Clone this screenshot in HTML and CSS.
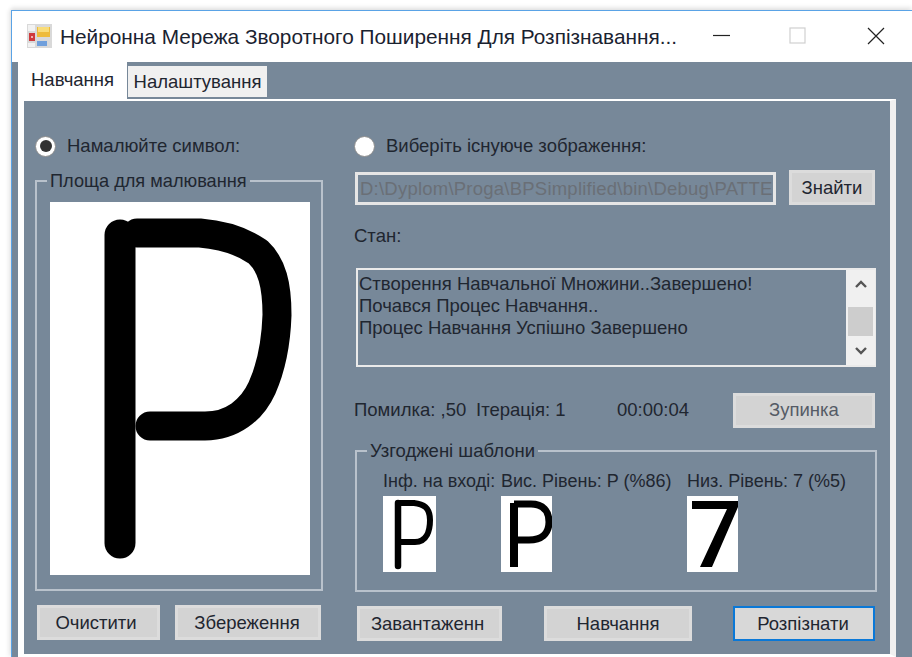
FILE: index.html
```html
<!DOCTYPE html>
<html lang="uk">
<head>
<meta charset="utf-8">
<title>Нейронна Мережа</title>
<link rel="stylesheet" href="styles.css">
</head>
<body>
<div class="window">
  <header class="titlebar">
    <svg class="app-icon" width="25" height="24" viewBox="0 0 25 24">
      <rect width="25" height="24" fill="#d9d9d9"/>
      <rect x="1" y="1" width="7" height="6" fill="#f2f2f2"/>
      <rect x="10" y="3" width="13" height="10" fill="#eebb3a"/>
      <rect x="11" y="3" width="11" height="5" fill="#f9dc78"/>
      <rect x="2" y="9" width="6" height="8" fill="#cf3a3c"/>
      <rect x="4" y="12" width="2" height="2" fill="#f0b0b0"/>
      <rect x="10" y="17" width="10" height="5" fill="#6f9fdc"/>
      <rect x="1" y="19" width="7" height="4" fill="#f2f2f2"/>
    </svg>
    <span class="title">Нейронна Мережа Зворотного Поширення Для Розпізнавання...</span>
    <div class="controls">
      <svg class="ctl-min" width="18" height="18" viewBox="0 0 18 18"><path d="M0 8.5H17" stroke="#222" stroke-width="1.2"/></svg>
      <svg width="18" height="18" viewBox="0 0 18 18"><rect x="1" y="1" width="15" height="15" fill="none" stroke="#d0d0d0" stroke-width="1.2"/></svg>
      <svg width="18" height="18" viewBox="0 0 18 18"><path d="M1 1L17 17M17 1L1 17" stroke="#222" stroke-width="1.2"/></svg>
    </div>
  </header>

  <div class="client">
    <nav class="tabs">
      <div class="tab tab-active">Навчання</div>
      <div class="tab">Налаштування</div>
    </nav>
    <main class="page">
      <section class="col-left">
        <label class="radio-row"><span class="radio radio-on"></span>Намалюйте символ:</label>
        <fieldset class="group group-draw">
          <legend>Площа для малювання</legend>
          <svg class="canvas" width="260" height="373" viewBox="50 202 260 373">
            <path d="M120 235V543" fill="none" stroke="#000" stroke-width="31" stroke-linecap="round"/>
            <path d="M137 233H200C225 235 245 243 258 252C272 265 277 285 277 315C276 345 270 370 262 388C252 410 232 426 205 426H150" fill="none" stroke="#000" stroke-width="29" stroke-linecap="round"/>
          </svg>
        </fieldset>
        <div class="buttons buttons-left">
          <button class="btn btn-clear">Очистити</button>
          <button class="btn btn-save">Збереження</button>
        </div>
      </section>

      <section class="col-right">
        <label class="radio-row"><span class="radio"></span>Виберіть існуюче зображення:</label>
        <div class="path-row">
          <div class="path-box">D:\Dyplom\Proga\BPSimplified\bin\Debug\PATTE</div>
          <button class="btn btn-find">Знайти</button>
        </div>
        <div class="state-label">Стан:</div>
        <div class="log">
          <div class="log-text">
            <div>Створення Навчальної Множини..Завершено!</div>
            <div>Почався Процес Навчання..</div>
            <div>Процес Навчання Успішно Завершено</div>
          </div>
          <div class="scrollbar">
            <svg width="14" height="9" viewBox="0 0 14 9"><path d="M2 7L7 2L12 7" fill="none" stroke="#555" stroke-width="2.4"/></svg>
            <div class="thumb"></div>
            <svg width="14" height="9" viewBox="0 0 14 9"><path d="M2 2L7 7L12 2" fill="none" stroke="#555" stroke-width="2.4"/></svg>
          </div>
        </div>
        <div class="status-row">
          <span class="stat-error">Помилка: ,50</span>
          <span class="stat-iter">Ітерація: 1</span>
          <span class="stat-time">00:00:04</span>
          <button class="btn btn-stop">Зупинка</button>
        </div>
        <fieldset class="group group-match">
          <legend>Узгоджені шаблони</legend>
          <div class="matches">
            <figure class="match match-input">
              <figcaption>Інф. на вході:</figcaption>
              <svg width="53" height="76" viewBox="0 0 53 76">
                <rect width="53" height="76" fill="#fff"/>
                <path d="M15 7V70" fill="none" stroke="#000" stroke-width="6.5" stroke-linecap="round"/>
                <path d="M16 7H31C40 8 47 11 47 24C47 34 44 46 32 46H18" fill="none" stroke="#000" stroke-width="6" stroke-linecap="round"/>
              </svg>
            </figure>
            <figure class="match match-high">
              <figcaption>Вис. Рівень: P (%86)</figcaption>
              <svg width="51" height="76" viewBox="0 0 51 76">
                <rect width="51" height="76" fill="#fff"/>
                <path d="M13 7V71" fill="none" stroke="#000" stroke-width="8"/>
                <path d="M13 8H30C42 8 48 15 48 26C48 38 40 44 28 44H13" fill="none" stroke="#000" stroke-width="7"/>
              </svg>
            </figure>
            <figure class="match match-low">
              <figcaption>Низ. Рівень: 7 (%5)</figcaption>
              <svg width="51" height="76" viewBox="0 0 51 76">
                <rect width="51" height="76" fill="#fff"/>
                <path d="M5 5H51V11L25 71H13L40 13H5Z" fill="#000"/>
              </svg>
            </figure>
          </div>
        </fieldset>
        <div class="buttons buttons-right">
          <button class="btn btn-load">Завантаженн</button>
          <button class="btn btn-train">Навчання</button>
          <button class="btn btn-recognize">Розпізнати</button>
        </div>
      </section>
    </main>
  </div>
</div>
</body>
</html>
```

FILE: styles.css
```css
* { box-sizing: border-box; }

html, body {
  margin: 0;
  height: 657px;
  overflow: hidden;
  background: #fff;
}

body {
  padding: 10px 0 0 11px;
  font-family: "Liberation Sans", Arial, sans-serif;
  font-size: 18.5px;
  color: #1f2630;
}

.window {
  height: 647px;
  border-top: 1px solid #5aa3e6;
  border-left: 1px solid #5aa3e6;
  box-shadow: 0 -3px 4px rgba(0, 0, 0, 0.09), -3px 0 4px rgba(0, 0, 0, 0.06);
  display: flex;
  flex-direction: column;
}

/* Caption bar */
.titlebar {
  height: 51px;
  flex: none;
  background: #fff;
  display: flex;
  align-items: center;
  padding: 0 27px 2px 15px;
}

.app-icon { flex: none; }

.title {
  margin: 3px 0 0 8px;
  font-size: 20.8px;
  color: #1a2230;
  white-space: nowrap;
}

.controls {
  margin-left: auto;
  display: flex;
  gap: 60px;
  align-items: center;
}

.ctl-min { margin-right: -2px; }

/* Form area */
.client {
  flex: 1;
  background: #778899;
  padding: 0 16px 0 6px;
  display: flex;
  flex-direction: column;
}

.tabs {
  display: flex;
  height: 37px;
  flex: none;
  align-items: flex-end;
}

.tab {
  height: 31px;
  width: 139px;
  margin: 0 0 2px 1px;
  background: #f0f0f0;
  text-align: center;
  line-height: 32px;
}

.tab-active {
  height: 37px;
  width: 109px;
  margin: 0;
  background: #fff;
  line-height: 35px;
}

.page {
  flex: 1;
  background: #778899;
  border: solid #fff;
  border-width: 2px 6px 3px 6px;
  border-right-color: #f0f0f0;
  display: flex;
  padding-top: 30px;
}

.col-left {
  width: 320px;
  flex: none;
  padding-left: 11px;
}

.col-right {
  width: 535px;
  flex: none;
  padding-left: 10px;
}

/* Radio buttons */
.radio-row {
  height: 30px;
  display: flex;
  align-items: center;
  gap: 11px;
}

.radio {
  width: 21px;
  height: 21px;
  border-radius: 50%;
  background: #fff;
  border: 1px solid #8d8d8d;
  flex: none;
  display: flex;
  align-items: center;
  justify-content: center;
}

.radio-on::after {
  content: "";
  width: 12px;
  height: 12px;
  border-radius: 50%;
  background: #333;
}

/* Group boxes */
.group {
  margin: 0;
  padding: 0;
  border: 2px solid #b9c2cc;
  min-width: 0;
}

.group legend {
  padding: 0 3px;
  line-height: 18px;
}

.group-draw {
  width: 288px;
  height: 419px;
  margin-top: 11px;
  padding: 12px 11px 0 13px;
}

.group-draw legend {
  margin-left: -3px;
  font-size: 18.2px;
}

.canvas {
  display: block;
  background: #fff;
}

.group-match {
  width: 522px;
  height: 150px;
  margin: 14px 0 0 1px;
  padding: 12px 0 0 26px;
}

.group-match legend { margin-left: -16px; }

.matches { display: flex; }

.match {
  margin: 0;
  display: flex;
  flex-direction: column;
  gap: 6px;
}

.match svg { display: block; }

.match figcaption {
  line-height: 18px;
  white-space: nowrap;
  font-size: 18px;
}

.match-input { width: 118px; }
.match-high { width: 186px; }

/* Buttons */
.btn {
  height: 35px;
  padding: 0;
  font: inherit;
  color: inherit;
  background: #d3d3d3;
  border: 3px solid #dcdcdc;
  white-space: nowrap;
}

.buttons { display: flex; margin-top: 14px; }

.buttons-left { padding-left: 2px; gap: 15px; }
.btn-clear { width: 123px; padding-right: 5px; }
.btn-save { width: 146px; padding-right: 2px; }

.buttons-right { padding-left: 3px; }
.btn-load { width: 145px; padding-right: 4px; }
.btn-train { width: 148px; margin-left: 42px; }
.btn-recognize {
  width: 142px;
  margin-left: 41px;
  padding-right: 2px;
  background: #d8d8d8;
  border: 2px solid #0a78d7;
}

/* Path row */
.path-row {
  display: flex;
  align-items: flex-end;
  margin-top: 9px;
  padding-left: 1px;
}

.path-box {
  width: 421px;
  height: 33px;
  border: 3px solid #e6e6e6;
  color: #6a6f76;
  line-height: 27px;
  letter-spacing: 0.23px;
  padding-left: 2px;
  white-space: nowrap;
  overflow: hidden;
}

.btn-find { width: 86px; margin-left: 13px; }

.state-label {
  margin-top: 21px;
  line-height: 20px;
}

/* Log list */
.log {
  width: 520px;
  height: 99px;
  margin: 22px 0 0 2px;
  border: solid #eaeaea;
  border-width: 2px 1px 2px 2px;
  display: flex;
}

.log-text {
  flex: 1;
  padding: 3px 0 0 1px;
  line-height: 22px;
  white-space: nowrap;
}

.scrollbar {
  width: 29px;
  flex: none;
  background: #f0f0f0;
  display: flex;
  flex-direction: column;
  align-items: center;
  padding-top: 10px;
}

.thumb {
  width: 25px;
  height: 29px;
  margin: 18px 0 10px;
  background: #cdcdcd;
}

/* Status line */
.status-row {
  display: flex;
  align-items: center;
  margin-top: 25px;
  height: 36px;
}

.stat-error { width: 122px; }
.stat-iter { width: 141px; }
.stat-time { width: 116px; }
.btn-stop { width: 142px; color: #555b66; }
```
